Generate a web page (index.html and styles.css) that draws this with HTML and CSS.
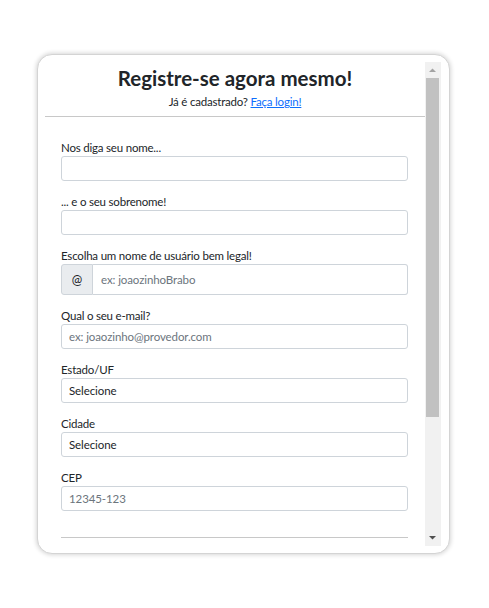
FILE: index.html
```html
<!DOCTYPE html>
<html lang="pt-BR">
<head>
<meta charset="utf-8">
<title>Registro</title>
<link rel="stylesheet" href="styles.css">
</head>
<body>
<div class="card">
  <div class="pane">
    <div class="content">
      <header class="head">
        <h1 class="title">Registre-se agora mesmo!</h1>
        <p class="sub">Já é cadastrado? <a href="#" class="link">Faça login!</a></p>
      </header>
      <form class="form">
        <div class="group">
          <label class="label">Nos diga seu nome...</label>
          <input class="field" type="text">
        </div>
        <div class="group">
          <label class="label">... e o seu sobrenome!</label>
          <input class="field" type="text">
        </div>
        <div class="group">
          <label class="label">Escolha um nome de usuário bem legal!</label>
          <div class="igroup">
            <span class="addon">@</span>
            <input class="field field-ig" type="text" placeholder="ex: joaozinhoBrabo">
          </div>
        </div>
        <div class="group">
          <label class="label">Qual o seu e-mail?</label>
          <input class="field" type="email" placeholder="ex: joaozinho@provedor.com">
        </div>
        <div class="group">
          <label class="label">Estado/UF</label>
          <select class="field sel"><option>Selecione</option></select>
        </div>
        <div class="group">
          <label class="label">Cidade</label>
          <select class="field sel"><option>Selecione</option></select>
        </div>
        <div class="group">
          <label class="label">CEP</label>
          <input class="field" type="text" placeholder="12345-123">
        </div>
        <hr class="rule">
      </form>
    </div>
    <div class="sbar" aria-hidden="true">
      <div class="sbtn">
        <svg width="16" height="15" viewBox="0 0 16 15"><polygon points="4,10 11,10 7.5,6.5" fill="#a3a3a3"/></svg>
      </div>
      <div class="track"><div class="thumb"></div></div>
      <div class="sbtn">
        <svg width="16" height="15" viewBox="0 0 16 15"><polygon points="4,5 11,5 7.5,8.5" fill="#505050"/></svg>
      </div>
    </div>
  </div>
</div>
</body>
</html>
```
FILE: styles.css
```css
* { box-sizing: border-box; }
html, body { margin: 0; padding: 0; }
body {
  width: 489px;
  height: 608px;
  padding: 54px 0 0 37px;
  background: #fff;
  font-family: "Lato", "Noto Sans", sans-serif;
  color: #212529;
}
.card {
  width: 413px;
  height: 500px;
  padding: 7px 8px 7px 7px;
  border-radius: 15px;
  background: #fff;
  border: 1px solid #d4d4d4;
  box-shadow: 0 0 4px 1px rgba(0,0,0,0.16);
}
.pane {
  height: 100%;
  display: flex;
}
.content {
  flex: 1;
  min-width: 0;
  overflow: hidden;
}
.sbar {
  width: 16px;
  flex: none;
  display: flex;
  flex-direction: column;
  background: #f1f1f1;
}
.sbtn {
  height: 15px;
  flex: none;
}
.sbtn svg { display: block; }
.track {
  flex: 1;
  padding: 1px 2px 0 1px;
}
.thumb {
  height: 339px;
  background: #c1c1c1;
}
.head {
  text-align: center;
  padding: 3px 0 6px;
  border-bottom: 1px solid #c8c8c8;
}
.title {
  margin: 0;
  font-size: 20.5px;
  line-height: 26px;
  font-weight: 700;
  color: #212529;
}
.sub {
  margin: 2px 0 0;
  font-size: 11.5px;
  line-height: 17px;
  letter-spacing: -0.2px;
}
.link { color: #0d6efd; }
.form {
  padding: 22px 17px 0 16px;
}
.group { margin-bottom: 12px; }
.label {
  display: block;
  font-size: 11.5px;
  line-height: 17px;
  letter-spacing: -0.2px;
}
.field {
  display: block;
  width: 100%;
  height: 25px;
  padding: 0 7px;
  border: 1px solid #ced4da;
  border-radius: 3px;
  font-family: inherit;
  font-size: 11.5px;
  letter-spacing: -0.1px;
  color: #212529;
  background: #fff;
  outline: none;
}
.field::placeholder { color: #6c757d; }
.sel {
  -webkit-appearance: none;
  appearance: none;
}
.igroup {
  display: flex;
  height: 31px;
}
.addon {
  width: 32px;
  flex: none;
  display: flex;
  align-items: center;
  justify-content: center;
  background: #e9ecef;
  border: 1px solid #ced4da;
  border-radius: 3px 0 0 3px;
  font-size: 12.5px;
}
.field-ig {
  height: 31px;
  border-left: none;
  border-radius: 0 3px 3px 0;
  padding-left: 8px;
}
.rule {
  margin: 26px 0 0;
  border: none;
  border-top: 1px solid #c8c8c8;
}
```
